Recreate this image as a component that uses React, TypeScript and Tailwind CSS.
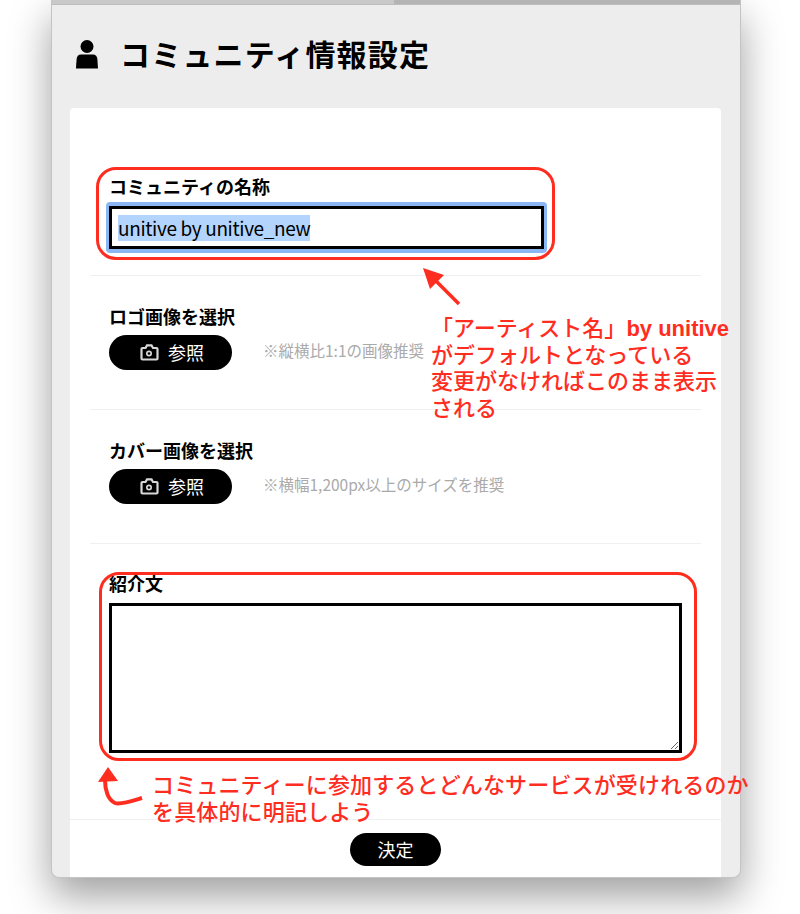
const JP = `font-['Noto_Sans_CJK_JP','Noto_Sans',sans-serif]`;

const UserIcon = () => (
  <svg width="22" height="30" viewBox="0 0 22 30" className="shrink-0">
    <circle cx="11" cy="7.5" r="6.5" fill="#000" />
    <path d="M5 15.5h12c2.6 0 4.2 2 4.4 4.5l.6 9.5H0l.6-9.5C.8 17.500 2.400 15.500 5 15.500z" fill="#000" />
  </svg>
);

const CameraIcon = () => (
  <svg width="19" height="17" viewBox="0 0 19 17" fill="none" stroke="#d8d8d8" strokeWidth="2.200">
    <path d="M2.500 4h3l1.500-2.600h4.500L13 4h3.500c.6 0 1 .4 1 1v9.500c0 .6-.4 1-1 1h-14c-.6 0-1-.4-1-1V5c0-.6.400-1 1-1z" />
    <circle cx="9" cy="9.500" r="3" fill="#d8d8d8" stroke="none" />
    <circle cx="9" cy="9.500" r="1.300" fill="#000" stroke="none" />
  </svg>
);

const BrowseRow = ({ label, hint }: { label: string; hint: string }) => (
  <div className="h-[134px] border-b border-[#f0f0f0] mx-5 pt-[27px] pl-[19px]">
    <div className="text-[18px] leading-[26px] font-bold text-black">{label}</div>
    <div className="flex items-center mt-[6px]">
      <div className="flex items-center justify-center gap-[9px] w-[123px] h-[35px] rounded-full bg-black text-white text-[18px] pl-[3px]">
        <CameraIcon />
        <span>参照</span>
      </div>
      <span className="ml-[31px] mb-[3px] text-[15.500px] text-[#aaaaaa]">{hint}</span>
    </div>
  </div>
);

export default function App() {
  return (
    <div className={`${JP} relative h-[914px] w-[800px] overflow-hidden bg-white`}>
      <div className="ml-[51px] flex h-[878px] w-[690px] flex-col rounded-b-[8px] border-x border-b border-[#c4c4c4] bg-[#ededed] shadow-[0_18px_40px_rgba(0,0,0,0.38)] overflow-hidden">
        <div className="flex h-[5px] shrink-0 border-b border-[#bdbdbd]">
          <div className="w-[342px] bg-[#c9c9c9]" />
          <div className="flex-1 bg-[#b4b4b4]" />
        </div>

        <div className="flex h-[103px] shrink-0 items-center pl-[24px] pb-[6px]">
          <UserIcon />
          <h1 className="ml-[22px] -mt-[1px] text-[30px] font-bold text-black tracking-[1.200px]">コミュニティ情報設定</h1>
        </div>

        <div className="ml-[18px] mr-[19px] flex-1 rounded-t-[4px] bg-white">
          <div className="h-[168px] border-b border-[#f0f0f0] mx-5 pt-[65px] pl-[19px]">
            <div className="text-[18px] leading-[26px] font-bold text-black">コミュニティの名称</div>
            <div className="-ml-[3px] mt-[3px] w-[441px] h-[51px] rounded-[4px] bg-[#8ab6f4] px-[3px] py-[4px]">
              <div className="flex h-[43px] items-center border-[3px] border-black bg-white pl-[6px] text-[19px] tracking-[-0.360px] text-black">
                <span className="bg-[#b3d4fc] leading-[26px]">unitive by unitive_new</span>
              </div>
            </div>
          </div>

          <BrowseRow label="ロゴ画像を選択" hint="※縦横比1:1の画像推奨" />
          <BrowseRow label="カバー画像を選択" hint="※横幅1,200px以上のサイズを推奨" />

          <div className="h-[275px] mx-5 pt-[26px] pl-[19px]">
            <div className="text-[18px] leading-[26px] font-bold text-black">紹介文</div>
            <textarea className="block mt-[7px] h-[150px] w-[573px] border-[3px] border-black bg-white" />
          </div>

          <div className="flex h-[59px] justify-center border-t border-[#f0f0f0] pt-[13px]">
            <div className="flex h-[33px] w-[91px] items-center justify-center rounded-full bg-black text-[18px] text-white">決定</div>
          </div>
        </div>
      </div>

      {/* annotations on top of the screenshot */}
      <div className="absolute left-[96px] top-[167px] h-[93px] w-[459px] rounded-[20px] border-[3px] border-[#ff2d1f]" />
      <div className="absolute left-[99px] top-[572px] h-[189px] w-[598px] rounded-[20px] border-[3px] border-[#ff2d1f]" />

      <svg className="absolute left-[410px] top-[260px]" width="60" height="50" viewBox="0 0 60 50">
        <path d="M49 44L24 19" stroke="#ff2d1f" strokeWidth="3.500" fill="none" />
        <path d="M13 8L34 15L20 29z" fill="#ff2d1f" />
      </svg>

      <svg className="absolute left-[90px] top-[760px]" width="60" height="60" viewBox="0 0 60 60">
        <path d="M52 38C42 41 30 45 25 43C18 40 15 30 15 20" stroke="#ff2d1f" strokeWidth="4" fill="none" />
        <path d="M18 7L28 21L8 22z" fill="#ff2d1f" />
      </svg>

      <div className="absolute left-[431px] top-[313px] w-[320px] text-[22px] leading-[26.500px] font-medium text-[#ff2d1f]">
        <div className="whitespace-nowrap h-[26.500px]">「アーティスト名」<span className="font-['Liberation_Sans'] font-bold">by unitive</span></div>
        <div className="whitespace-nowrap">がデフォルトとなっている</div>
        <div className="whitespace-nowrap">変更がなければこのまま表示</div>
        <div>される</div>
      </div>

      <div className="absolute left-[152px] top-[770px] whitespace-nowrap text-[22px] leading-[26.500px] tracking-[0.150px] font-medium text-[#ff2d1f]">
        <div>コミュニティーに参加するとどんなサービスが受けれるのか</div>
        <div>を具体的に明記しよう</div>
      </div>
    </div>
  );
}
